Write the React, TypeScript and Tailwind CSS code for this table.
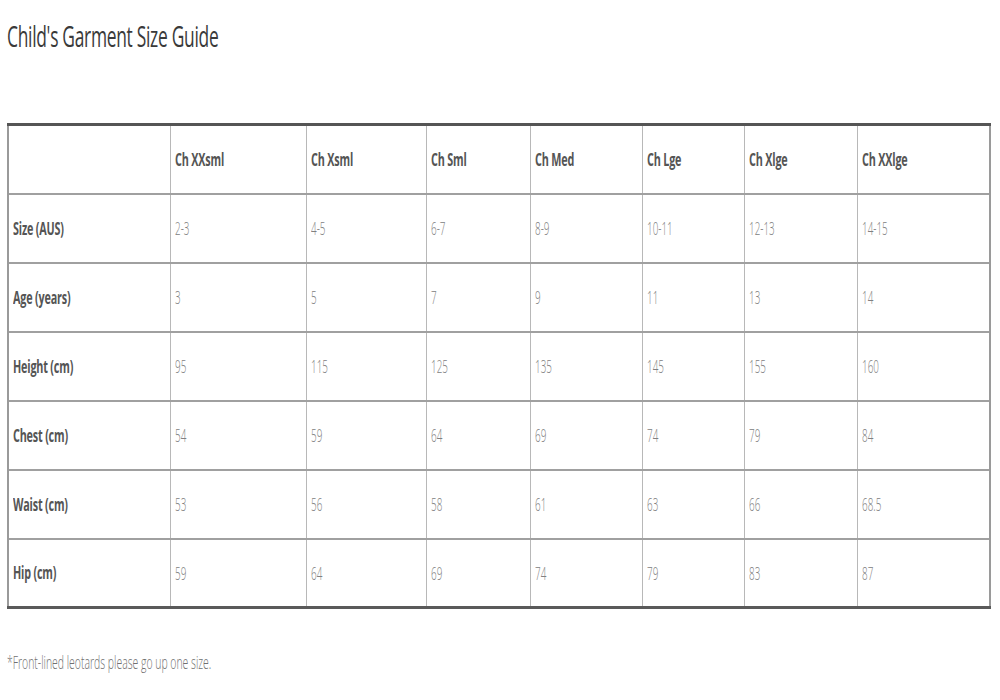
const headers = ['Ch XXsml', 'Ch Xsml', 'Ch Sml', 'Ch Med', 'Ch Lge', 'Ch Xlge', 'Ch XXlge'];

const rows: { label: string; values: string[] }[] = [
  { label: 'Size (AUS)', values: ['2-3', '4-5', '6-7', '8-9', '10-11', '12-13', '14-15'] },
  { label: 'Age (years)', values: ['3', '5', '7', '9', '11', '13', '14'] },
  { label: 'Height (cm)', values: ['95', '115', '125', '135', '145', '155', '160'] },
  { label: 'Chest (cm)', values: ['54', '59', '64', '69', '74', '79', '84'] },
  { label: 'Waist (cm)', values: ['53', '56', '58', '61', '63', '66', '68.5'] },
  { label: 'Hip (cm)', values: ['59', '64', '69', '74', '79', '83', '87'] },
];

const Narrow = ({ children, scale }: { children: React.ReactNode; scale: string }) => (
  <span className={`inline-block origin-left whitespace-nowrap ${scale}`}>{children}</span>
);

export default function App() {
  return (
    <div className="w-[1000px] h-[700px] bg-white px-[7px] pt-[14px] font-['Open_Sans',sans-serif]">
      <h1 className="text-[30px] leading-[44px] text-[#3a3a3a] tracking-[-0.5px]">
        <Narrow scale="scale-x-[0.58]">Child's Garment Size Guide</Narrow>
      </h1>

      <table className="mt-[65px] w-[982px] table-fixed border-collapse">
        <colgroup>
          <col className="w-[162px]" />
          <col className="w-[136px]" />
          <col className="w-[120px]" />
          <col className="w-[104px]" />
          <col className="w-[112px]" />
          <col className="w-[102px]" />
          <col className="w-[113px]" />
          <col className="w-[133px]" />
        </colgroup>
        <thead>
          <tr className="h-[69px] border-t-[3px] border-t-[#555] border-b-2 border-b-[#a0a0a0]">
            <th className="border-l-2 border-r border-l-[#9a9a9a] border-r-[#b8b8b8]" />
            {headers.map((h, i) => (
              <th
                key={h}
                className={`text-left align-middle pl-[4px] text-[18px] font-bold text-[#555] tracking-[-0.3px] border-r ${
                  i === headers.length - 1 ? 'border-r-2 border-r-[#9a9a9a]' : 'border-r-[#b8b8b8]'
                }`}
              >
                <Narrow scale="scale-x-[0.6]">{h}</Narrow>
              </th>
            ))}
          </tr>
        </thead>
        <tbody>
          {rows.map((r, ri) => (
            <tr
              key={r.label}
              className={`h-[69px] ${
                ri === rows.length - 1 ? 'border-b-[3px] border-b-[#5a5a5a]' : 'border-b-2 border-b-[#a0a0a0]'
              }`}
            >
              <td className="pl-[4px] align-middle text-[18px] font-bold text-[#555] tracking-[-0.3px] border-l-2 border-r border-l-[#9a9a9a] border-r-[#b8b8b8]">
                <Narrow scale="scale-x-[0.6]">{r.label}</Narrow>
              </td>
              {r.values.map((v, i) => (
                <td
                  key={i}
                  className={`pl-[4px] align-middle text-[19px] font-light text-[#808080] border-r ${
                    i === r.values.length - 1 ? 'border-r-2 border-r-[#9a9a9a]' : 'border-r-[#b8b8b8]'
                  }`}
                >
                  <Narrow scale="scale-x-[0.52]">{v}</Narrow>
                </td>
              ))}
            </tr>
          ))}
        </tbody>
      </table>

      <p className="mt-[40px] text-[18px] text-[#707070] font-light">
        <Narrow scale="scale-x-[0.58]">*Front-lined leotards please go up one size.</Narrow>
      </p>
    </div>
  );
}
